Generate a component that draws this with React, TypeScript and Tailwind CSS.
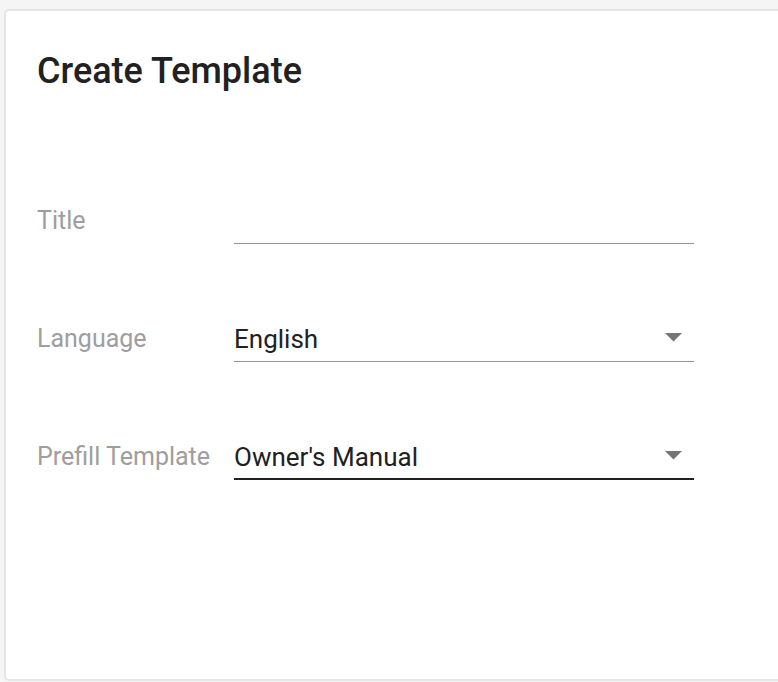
import React from "react";

function Caret() {
  return (
    <svg width="17" height="9" viewBox="0 0 17 9" className="mb-[4px] shrink-0">
      <path d="M0 0 L17 0 L8.5 8.5 Z" fill="#757575" />
    </svg>
  );
}

function Field({
  label,
  value,
  select,
  focused,
}: {
  label: string;
  value?: string;
  select?: boolean;
  focused?: boolean;
}) {
  return (
    <div className="flex items-end">
      <div className="w-[197px] shrink-0 pb-[9px] text-[25px] leading-[28px] text-[#9e9e9e]">
        {label}
      </div>
      <div
        className={
          focused
            ? "flex h-[37px] w-[460px] items-center justify-between border-b-2 border-[#212121] pb-[7px] pr-3"
            : "flex h-[37px] w-[460px] items-center justify-between border-b border-[#949494] pb-2 pr-3"
        }
      >
        <span className="text-[26px] leading-[28px] text-[#212121]">{value}</span>
        {select && <Caret />}
      </div>
    </div>
  );
}

export default function App() {
  return (
    <div
      className="h-[682px] w-full overflow-hidden bg-[#f5f5f5] pl-[4px] pt-[9px]"
      style={{ fontFamily: "Roboto, 'Liberation Sans', sans-serif" }}
    >
      <div className="h-[672px] w-[800px] rounded-[5px] border-2 border-[#e6e6e6] bg-white pl-[31px] pt-[39px]">
        {/* Header */}
        <h1 className="text-[36px] font-medium leading-[42px] text-[#212121]">Create Template</h1>

        {/* Form */}
        <div className="mt-[115px] flex flex-col gap-[81px]">
          <Field label="Title" />
          <Field label="Language" value="English" select />
          <Field label="Prefill Template" value="Owner's Manual" select focused />
        </div>
      </div>
    </div>
  );
}
